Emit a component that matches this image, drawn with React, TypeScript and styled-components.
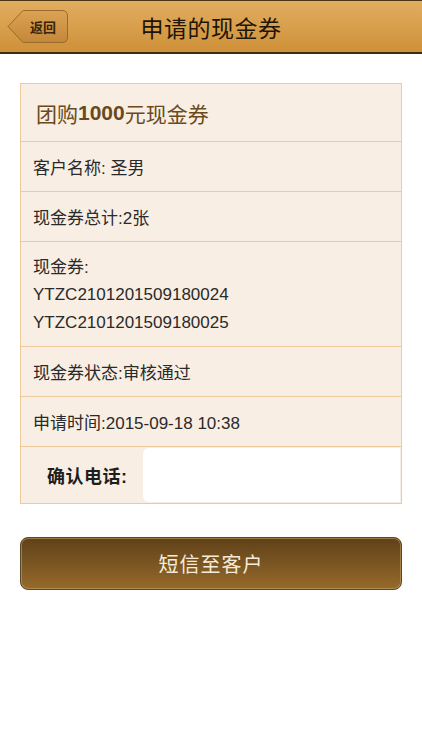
import styled, { createGlobalStyle } from 'styled-components';

const GlobalStyle = createGlobalStyle`
	html, body {
		margin: 0;
		padding: 0;
		background: #ffffff;
		font-family: 'Liberation Sans', 'Noto Sans CJK SC', sans-serif;
	}
`;

const Page = styled.div`
	width: 422px;
	height: 750px;
	background: #ffffff;
	display: flex;
	flex-direction: column;
`;

const NavBar = styled.div`
	position: relative;
	height: 51px;
	display: flex;
	align-items: center;
	justify-content: center;
	background: linear-gradient(to bottom, #e2ad60 0%, #d89f4c 50%, #cf9038 100%);
	border-top: 1px solid #4a3514;
	border-bottom: 2px solid #3e2c12;
`;

const NavTitle = styled.h1`
	margin: 0;
	font-size: 23px;
	font-weight: normal;
	color: #1e1408;
	letter-spacing: 0.5px;
`;

const BackButton = styled.button`
	position: absolute;
	left: 7px;
	top: 8px;
	width: 62px;
	height: 34px;
	padding: 0 0 0 10px;
	border: none;
	background: none;
	cursor: pointer;
	font-family: inherit;
	font-size: 13px;
	font-weight: bold;
	color: #3a2508;

	svg {
		position: absolute;
		left: 0;
		top: 0;
	}

	span {
		position: relative;
	}
`;

const Card = styled.div`
	margin: 29px 20px 0;
	border: 1px solid #efcb9b;
	background: #f9eee3;
	display: flex;
	flex-direction: column;
`;

const Row = styled.div<{ $h?: number }>`
	box-sizing: border-box;
	height: ${p => p.$h ?? 50}px;
	padding: 0 12px;
	display: flex;
	align-items: center;
	border-bottom: 1px solid #efcb9b;
	font-size: 17px;
	color: #2a2a2a;
`;

const TitleRow = styled(Row)`
	padding-left: 15px;
	font-size: 21px;
	color: #6a4a1c;
`;

const MultiRow = styled(Row)`
	flex-direction: column;
	align-items: flex-start;
	justify-content: center;
	line-height: 27.5px;
	padding-top: 2px;
`;

const PhoneRow = styled.div`
	height: 56px;
	display: flex;
	align-items: stretch;
`;

const PhoneLabel = styled.label`
	width: 122px;
	box-sizing: border-box;
	padding-left: 26px;
	display: flex;
	align-items: center;
	font-size: 18px;
	font-weight: bold;
	color: #1e1e1e;
	letter-spacing: 0.5px;
`;

const PhoneInput = styled.input`
	flex: 1;
	border: none;
	outline: none;
	background: #ffffff;
	border-radius: 6px 0 0 6px;
	margin: 1px 1px 1px 0;
	padding: 0 10px;
	font-family: inherit;
	font-size: 16px;
`;

const SendButton = styled.button`
	margin: 33px 20px 0;
	height: 53px;
	border: 1px solid #5a4628;
	border-radius: 8px;
	background: linear-gradient(to bottom, #5f4118 0%, #7a5522 50%, #976a2a 100%);
	box-shadow: inset 0 0 0 1px rgba(200, 165, 110, 0.55);
	font-family: inherit;
	font-size: 20px;
	color: #f6ebd8;
	letter-spacing: 1px;
	cursor: pointer;
`;

const BackShape = () => (
	<svg width='62' height='35' viewBox='0 0 62 35'>
		<defs>
			<linearGradient id='backFill' x1='0' y1='0' x2='0' y2='1'>
				<stop offset='0' stopColor='#dca354' />
				<stop offset='1' stopColor='#c3873a' />
			</linearGradient>
		</defs>
		<path
			d='M1 17.5 L16 1.5 H55 Q60.5 1.5 60.5 7 V28 Q60.5 33.5 55 33.5 H16 Z'
			fill='url(#backFill)'
			stroke='#9a6a2c'
			strokeWidth='1'
		/>
	</svg>
);

const App = () => {
	return (
		<Page>
			<GlobalStyle />
			<NavBar>
				<BackButton>
					<BackShape />
					<span>返回</span>
				</BackButton>
				<NavTitle>申请的现金券</NavTitle>
			</NavBar>
			<Card>
				<TitleRow $h={58}>
					团购<b>1000</b>元现金券
				</TitleRow>
				<Row>客户名称: 圣男</Row>
				<Row>现金券总计:2张</Row>
				<MultiRow $h={105}>
					<div>现金券:</div>
					<div>YTZC2101201509180024</div>
					<div>YTZC2101201509180025</div>
				</MultiRow>
				<Row>现金券状态:审核通过</Row>
				<Row>申请时间:2015-09-18 10:38</Row>
				<PhoneRow>
					<PhoneLabel>确认电话:</PhoneLabel>
					<PhoneInput type='tel' />
				</PhoneRow>
			</Card>
			<SendButton>短信至客户</SendButton>
		</Page>
	);
};

export default App;
